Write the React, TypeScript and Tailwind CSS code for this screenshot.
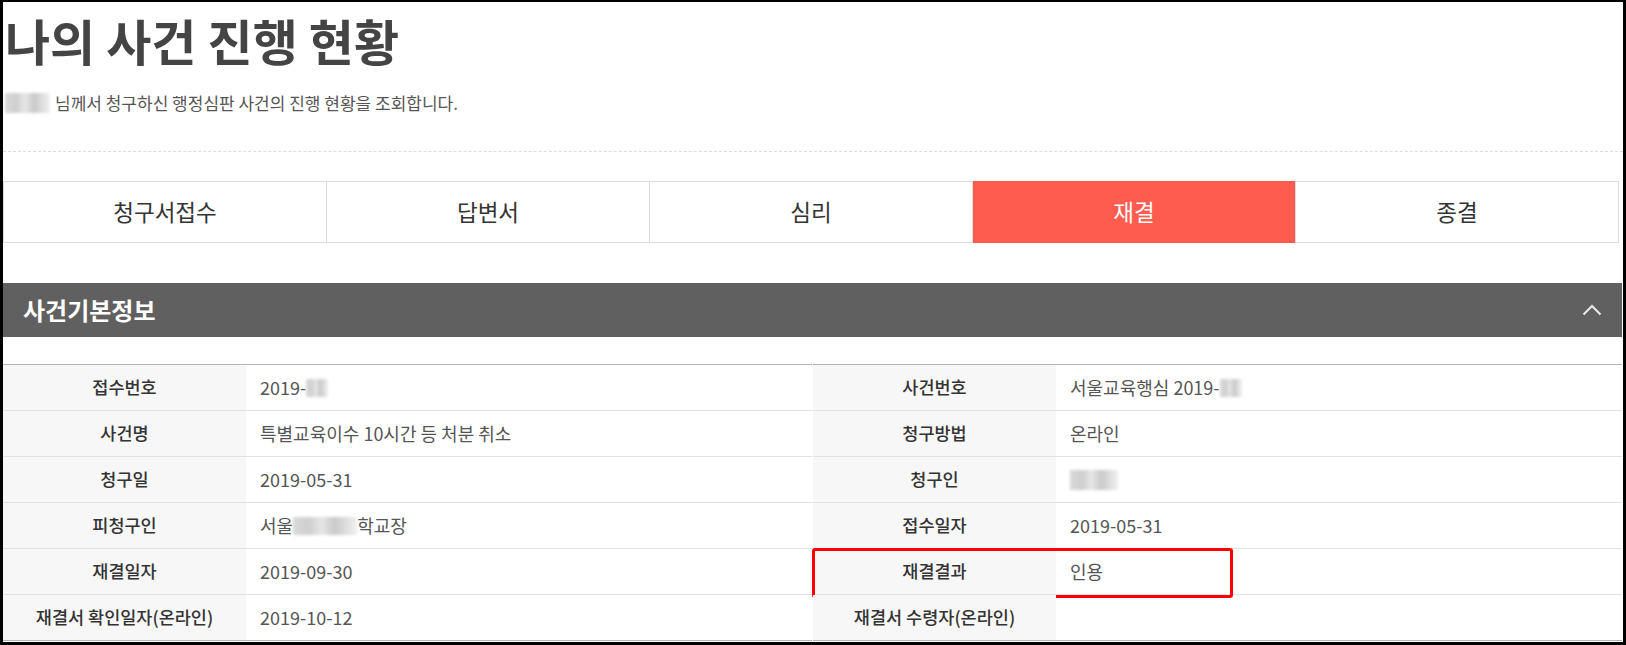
import React from "react";

const FONT = '"Noto Sans CJK KR", "Noto Sans", sans-serif';

function Blur({ w, h = 18 }: { w: number; h?: number }) {
  return (
    <span
      className="inline-block align-middle blur-[1.5px]"
      style={{
        width: w,
        height: h,
        background:
          "linear-gradient(90deg,#d9d9d9 0%,#cfcfcf 25%,#e6e6e6 45%,#c9c9c9 65%,#e0e0e0 85%,#f0f0f0 100%)",
      }}
    />
  );
}

type Row = { label: string; value: React.ReactNode };

function InfoTable({ rows, highlight }: { rows: Row[]; highlight?: number }) {
  return (
    <div className="flex-1 border-t border-[#b4b4b4]">
      {rows.map((r, i) => (
        <div
          key={i}
          className={`relative flex h-[46px] border-b ${
            i === rows.length - 1 ? "border-[#b4b4b4]" : "border-[#e2e2e2]"
          }`}
        >
          <div className="flex w-[243px] shrink-0 items-center justify-center bg-[#f7f7f7] text-[17.5px] font-medium text-[#333]">
            {r.label}
          </div>
          <div className="flex flex-1 items-center pl-[14px] text-[18px] text-[#555]">{r.value}</div>
          {highlight === i && (
            <div className="pointer-events-none absolute left-[-1px] top-[-1px] h-[50px] w-[421px] rounded-[3px] border-[3px] border-[#ff0000]" />
          )}
        </div>
      ))}
    </div>
  );
}

export default function App() {
  const tabs = ["청구서접수", "답변서", "심리", "재결", "종결"];
  const left: Row[] = [
    {
      label: "접수번호",
      value: (
        <span className="flex items-center">
          2019-
          <Blur w={22} />
        </span>
      ),
    },
    { label: "사건명", value: "특별교육이수 10시간 등 처분 취소" },
    { label: "청구일", value: "2019-05-31" },
    {
      label: "피청구인",
      value: (
        <span className="flex items-center">
          서울
          <Blur w={64} />
          학교장
        </span>
      ),
    },
    { label: "재결일자", value: "2019-09-30" },
    { label: "재결서 확인일자(온라인)", value: "2019-10-12" },
  ];
  const right: Row[] = [
    {
      label: "사건번호",
      value: (
        <span className="flex items-center">
          서울교육행심 2019-
          <Blur w={22} />
        </span>
      ),
    },
    { label: "청구방법", value: "온라인" },
    { label: "청구인", value: <Blur w={48} h={20} /> },
    { label: "접수일자", value: "2019-05-31" },
    { label: "재결결과", value: "인용" },
    { label: "재결서 수령자(온라인)", value: "" },
  ];

  return (
    <div
      className="box-border h-[645px] w-[1626px] overflow-hidden border-b-[3px] border-l-[3px] border-r-[3px] border-t-2 border-black bg-white"
      style={{ fontFamily: FONT }}
    >
      {/* Title block */}
      <div className="h-[150px] border-b border-dashed border-[#dcdcdc]">
        <h1 className="pl-[2px] pt-[9px] text-[49px] font-bold leading-[1.2] text-[#444]">
          나의 사건 진행 현황
        </h1>
        <p className="mt-[21px] flex items-center pl-[2px] text-[17px] leading-[24px] text-[#555]">
          <Blur w={45} h={20} />
          <span className="ml-[5px]">님께서 청구하신 행정심판 사건의 진행 현황을 조회합니다.</span>
        </p>
      </div>

      {/* Steps */}
      <div className="mr-[4px] mt-[29px] flex h-[62px] border border-[#dcdcdc]">
        {tabs.map((t, i) => (
          <div
            key={t}
            className={`flex flex-1 items-center justify-center text-[22.5px] ${
              i > 0 ? "border-l border-[#dcdcdc]" : ""
            } ${i === 3 ? "my-[-1px] bg-[#ff5c50] text-white" : "text-[#333]"}`}
          >
            {t}
          </div>
        ))}
      </div>

      {/* Section header */}
      <div className="mr-[1px] mt-[40px] flex h-[54px] items-center justify-between bg-[#606060] pl-[20px] pr-[20px]">
        <span className="text-[24px] font-bold text-white">사건기본정보</span>
        <svg width="20" height="12" viewBox="0 0 20 12" fill="none">
          <path d="M1.5 10.5 L10 2 L18.5 10.5" stroke="#e6e6e6" strokeWidth="2.2" />
        </svg>
      </div>

      {/* Info tables */}
      <div className="mr-[1px] mt-[27px] flex">
        <InfoTable rows={left} />
        <div className="w-[1px]" />
        <InfoTable rows={right} highlight={4} />
      </div>
    </div>
  );
}
